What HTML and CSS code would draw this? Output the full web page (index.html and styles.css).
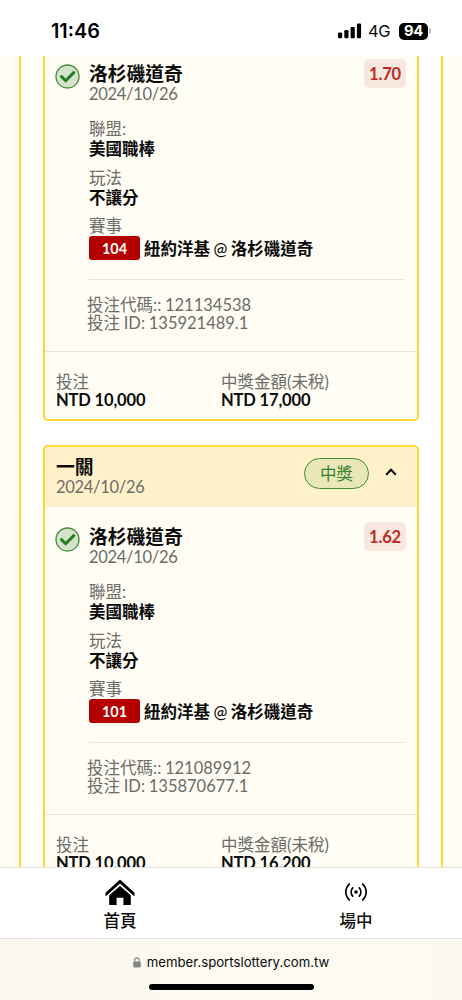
FILE: index.html
```html
<!DOCTYPE html>
<html lang="zh-Hant">
<head>
<meta charset="utf-8">
<meta name="viewport" content="width=device-width, initial-scale=1">
<title>投注紀錄</title>
<link rel="stylesheet" href="styles.css">
</head>
<body>
<div class="phone">
  <header class="status">
    <span class="clock">11:46</span>
    <div class="indicators">
      <svg class="signal" viewBox="0 0 24 16"><rect x="0" y="9.6" width="4.2" height="5.6" rx="1.2"/><rect x="6.3" y="7" width="4.2" height="8.2" rx="1.2"/><rect x="12.6" y="3.9" width="4.2" height="11.3" rx="1.2"/><rect x="18.9" y="0.6" width="4.2" height="14.6" rx="1.2"/></svg>
      <span class="network">4G</span>
      <span class="battery">94</span><span class="battery-cap"></span>
    </div>
  </header>

  <main class="scroll">
    <section class="panel">
      <article class="card card-first">
        <div class="bet">
          <svg class="check" viewBox="0 0 25 25"><circle cx="12.5" cy="12.5" r="11.5"/><path d="M6.5 12.6l4.2 4.2 8-8.2"/></svg>
          <div class="detail">
            <div class="pick"><div><h2 class="team">洛杉磯道奇</h2><p class="date">2024/10/26</p></div><span class="odds">1.70</span></div>
            <dl class="facts">
              <div><dt>聯盟:</dt><dd>美國職棒</dd></div>
              <div><dt>玩法</dt><dd>不讓分</dd></div>
              <div><dt>賽事</dt><dd class="match"><span class="tag">104</span><span class="teams">紐約洋基 <span class="at">@</span> 洛杉磯道奇</span></dd></div>
            </dl>
            <div class="codes"><p class="code">投注代碼:: 121134538</p><p class="code">投注 ID: 135921489.1</p></div>
          </div>
        </div>
        <footer class="totals">
          <div><p class="label">投注</p><p class="amount">NTD 10,000</p></div>
          <div><p class="label">中獎金額(未稅)</p><p class="amount">NTD 17,000</p></div>
        </footer>
      </article>

      <article class="card">
        <header class="card-head">
          <div><h2 class="team">一關</h2><p class="date">2024/10/26</p></div>
          <div class="result"><span class="won">中獎</span>
          <svg class="chevron" viewBox="0 0 12 8"><path d="M1.2 6.8L6 1.8l4.8 5"/></svg></div>
        </header>
        <div class="bet">
          <svg class="check" viewBox="0 0 25 25"><circle cx="12.5" cy="12.5" r="11.5"/><path d="M6.5 12.6l4.2 4.2 8-8.2"/></svg>
          <div class="detail">
            <div class="pick"><div><h2 class="team">洛杉磯道奇</h2><p class="date">2024/10/26</p></div><span class="odds">1.62</span></div>
            <dl class="facts">
              <div><dt>聯盟:</dt><dd>美國職棒</dd></div>
              <div><dt>玩法</dt><dd>不讓分</dd></div>
              <div><dt>賽事</dt><dd class="match"><span class="tag">101</span><span class="teams">紐約洋基 <span class="at">@</span> 洛杉磯道奇</span></dd></div>
            </dl>
            <div class="codes"><p class="code">投注代碼:: 121089912</p><p class="code">投注 ID: 135870677.1</p></div>
          </div>
        </div>
        <footer class="totals">
          <div><p class="label">投注</p><p class="amount">NTD 10,000</p></div>
          <div><p class="label">中獎金額(未稅)</p><p class="amount">NTD 16,200</p></div>
        </footer>
      </article>
    </section>
  </main>

  <nav class="tabs">
    <a class="tab"><svg class="home" viewBox="0 0 30 27"><path d="M.5 13.8L15 .4l14.5 13.4v3.6L15 4.6.5 17.4z"/><path d="M4.2 16.3L15 7l10.8 9.3V26h-7.4v-7.2h-6.8V26H4.2z"/></svg><span>首頁</span></a>
    <a class="tab"><svg class="live" viewBox="0 0 22 18"><circle cx="11" cy="9" r="1.8"/><path d="M7.7 4.9a6 6 0 0 0 0 8.2M14.3 4.9a6 6 0 0 1 0 8.2M4.3 1.2a10.6 10.6 0 0 0 0 15.6M17.7 1.2a10.6 10.6 0 0 1 0 15.6"/></svg><span>場中</span></a>
  </nav>
  <footer class="browser">
    <div class="address"><svg class="lock" viewBox="0 0 8 11"><rect x=".2" y="4.5" width="7.6" height="6" rx="1.2"/><path d="M1.8 5V3.2a2.2 2.3 0 0 1 4.4 0V5"/></svg><span>member.sportslottery.com.tw</span></div>
    <div class="home-bar"></div>
  </footer>
</div>
</body>
</html>
```

FILE: styles.css
```css
* { box-sizing: border-box; }
body, h2, p, dl, dd { margin: 0; }
body { background: #fff; }
.phone {
  display: flex; flex-direction: column;
  width: 462px; height: 1000px; overflow: hidden;
  font: 400 16.5px/20px Lato, "Noto Sans CJK TC", sans-serif;
  color: #0b0b0b;
}
.status {
  display: flex; justify-content: space-between; flex: none;
  height: 56px; padding: 20px 31px 0 51px;
  font-family: Inter, sans-serif;
}
.clock { font-size: 19.8px; line-height: 22px; font-weight: 600; color: #000; }
.indicators { display: flex; align-items: center; height: 22px; }
.signal { width: 24px; height: 16px; margin-right: 6px; }
.network { width: 31px; font-size: 16.5px; letter-spacing: -.3px; }
.battery {
  width: 29px; height: 17px; border-radius: 5px; background: #000; color: #fff;
  font-size: 14.8px; line-height: 17px; font-weight: 700; text-align: center; letter-spacing: -.3px;
}
.battery-cap { width: 2px; height: 6px; margin-left: 1px; border-radius: 0 2px 2px 0; background: #bbb; }

.scroll { flex: none; height: 811px; overflow: hidden; background: #fffdf4; padding: 0 19px; }
.panel { min-height: 811px; padding: 0 22px; border: solid #ffd932; border-width: 0 2px; background: #fff; }
.card { border: 2px solid #ffd932; border-radius: 5px; background: #fffdf4; overflow: hidden; }
.card-first { margin: -14px 0 24px; }
.card-head { display: flex; justify-content: space-between; height: 60px; padding: 10px 20px 0 11px; background: #fff2ca; }
.result { display: flex; gap: 16px; align-items: center; height: 32px; }
.won {
  width: 65px; height: 31px; border: 1.3px solid #438b35; border-radius: 16px;
  background: #e9e7b9; color: #35822b; text-align: center; line-height: 30px;
}
.chevron { width: 12px; height: 8px; margin-bottom: 2px; fill: none; stroke: #000; stroke-width: 2; }
.team { font-size: 18.8px; line-height: 20px; font-weight: 700; white-space: nowrap; }
.date { padding-top: 1px; color: #6c6c69; line-height: 18px; letter-spacing: -.3px; }

.bet { display: flex; gap: 9px; padding: 20px 11px 19px 10px; }
.check { flex: none; width: 25px; height: 25px; fill: #d5e2cc; stroke: #438b35; stroke-width: 1.3; }
.check path { fill: none; stroke: #277c20; stroke-width: 3; stroke-linecap: round; stroke-linejoin: round; }
.detail { flex: 1; }
.pick { display: flex; justify-content: space-between; }
.odds {
  width: 42px; height: 29px; margin-top: -5px; border-radius: 5px;
  background: #f7e7df; color: #bd2924; letter-spacing: -.2px; font-weight: 700; line-height: 30px; text-align: center;
}
.facts { display: flex; flex-direction: column; gap: 8.5px; margin-top: 16px; margin-right: 2px; padding-bottom: 19px; border-bottom: 1px solid #e6e4dc; }
dt, .label, .code { color: #6c6c69; }
dt { line-height: 20px; }
dd { line-height: 20px; font-weight: 700; }
.match { display: flex; gap: 4px; height: 24px; line-height: 26px; white-space: nowrap; }
.tag { width: 51px; border-radius: 3px; background: #b50000; color: #fff; font-size: 14.4px; line-height: 25px; text-align: center; }
.teams { font-size: 16.5px; word-spacing: -.5px; }
.at { font-weight: 500; }
.codes { padding-top: 16px; margin-left: -2px; }
.code { line-height: 18px; word-spacing: -.5px; }
.totals { display: grid; grid-template-columns: 165px 1fr; height: 68px; padding: 21px 11px 0; border-top: 1px solid #e6e4dc; }
.totals p { line-height: 18px; }
.totals .amount { letter-spacing: -.15px; font-weight: 700; }

.tabs { display: grid; grid-template-columns: 236px 236px; flex: none; height: 72px; padding-left: 2px; background: #fff; border: solid #e2e2df; border-width: 1px 0; overflow: hidden; }
.tab { display: flex; flex-direction: column; align-items: center; justify-content: space-between; padding: 11px 0 7px; font-weight: 500; }
.home { width: 30px; height: 27px; }
.live { width: 22px; height: 18px; margin-top: 4px; fill: #000; }
.live path { fill: none; stroke: #000; stroke-width: 1.7; stroke-linecap: round; }
.browser { flex: 1; display: flex; flex-direction: column; align-items: center; background: linear-gradient(90deg, #fbf7ef, #fcfaf1 50%, #fcf9f1); padding-top: 13px; font-family: Inter, sans-serif; }
.address { display: flex; align-items: center; gap: 6px; font-size: 13.2px; line-height: 20px; }
.lock { width: 8px; height: 11px; fill: #858585; }
.lock path { fill: none; stroke: #858585; stroke-width: 1.1; }
.home-bar { width: 165px; height: 6px; margin-top: 12px; border-radius: 3px; background: #000; }
```
